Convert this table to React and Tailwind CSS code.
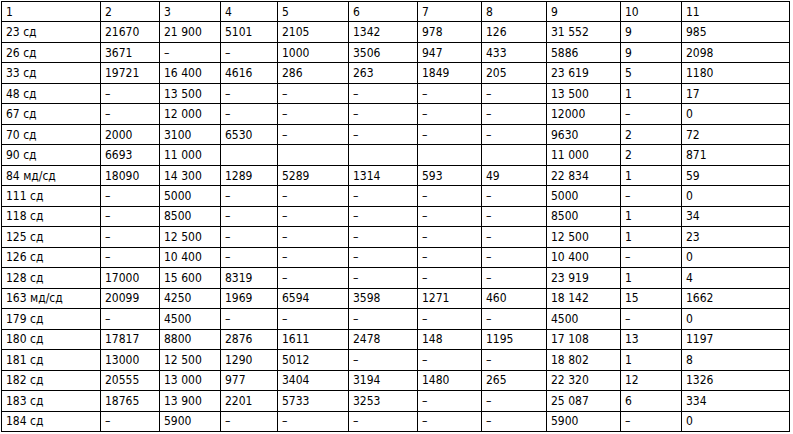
import React from "react";

const D = "–";
const rows = [
  ["1", "2", "3", "4", "5", "6", "7", "8", "9", "10", "11"],
  ["23 сд", "21670", "21 900", "5101", "2105", "1342", "978", "126", "31 552", "9", "985"],
  ["26 сд", "3671", D, D, "1000", "3506", "947", "433", "5886", "9", "2098"],
  ["33 сд", "19721", "16 400", "4616", "286", "263", "1849", "205", "23 619", "5", "1180"],
  ["48 сд", D, "13 500", D, D, D, D, D, "13 500", "1", "17"],
  ["67 сд", D, "12 000", D, D, D, D, D, "12000", D, "0"],
  ["70 сд", "2000", "3100", "6530", D, D, D, D, "9630", "2", "72"],
  ["90 сд", "6693", "11 000", "", "", "", "", "", "11 000", "2", "871"],
  ["84 мд/сд", "18090", "14 300", "1289", "5289", "1314", "593", "49", "22 834", "1", "59"],
  ["111 сд", D, "5000", D, D, D, D, D, "5000", D, "0"],
  ["118 сд", D, "8500", D, D, D, D, D, "8500", "1", "34"],
  ["125 сд", D, "12 500", D, D, D, D, D, "12 500", "1", "23"],
  ["126 сд", D, "10 400", D, D, D, D, D, "10 400", D, "0"],
  ["128 сд", "17000", "15 600", "8319", D, D, D, D, "23 919", "1", "4"],
  ["163 мд/сд", "20099", "4250", "1969", "6594", "3598", "1271", "460", "18 142", "15", "1662"],
  ["179 сд", D, "4500", D, D, D, D, D, "4500", D, "0"],
  ["180 сд", "17817", "8800", "2876", "1611", "2478", "148", "1195", "17 108", "13", "1197"],
  ["181 сд", "13000", "12 500", "1290", "5012", D, D, D, "18 802", "1", "8"],
  ["182 сд", "20555", "13 000", "977", "3404", "3194", "1480", "265", "22 320", "12", "1326"],
  ["183 сд", "18765", "13 900", "2201", "5733", "3253", D, D, "25 087", "6", "334"],
  ["184 сд", D, "5900", D, D, D, D, D, "5900", D, "0"],
];

export default function App() {
  return (
    <div className="w-[793px] h-[434px] bg-white overflow-hidden pt-px pl-px">
      <div
        className="grid w-[789px] h-[431px] border-l border-t border-black grid-cols-[99px_59px_61px_57px_71px_69px_64px_65px_74px_61px_108px] grid-rows-[repeat(21,minmax(0,1fr))] text-[12px] leading-none text-black font-stretch-condensed"
        style={{ fontFamily: '"DejaVu Sans Condensed", "DejaVu Sans", sans-serif' }}
      >
        {rows.map((r, i) =>
          r.map((c, j) => (
            <div
              key={i + "-" + j}
              className="border-r border-b border-black flex items-center pl-[4px] whitespace-nowrap overflow-hidden"
            >
              {c}
            </div>
          ))
        )}
      </div>
    </div>
  );
}
